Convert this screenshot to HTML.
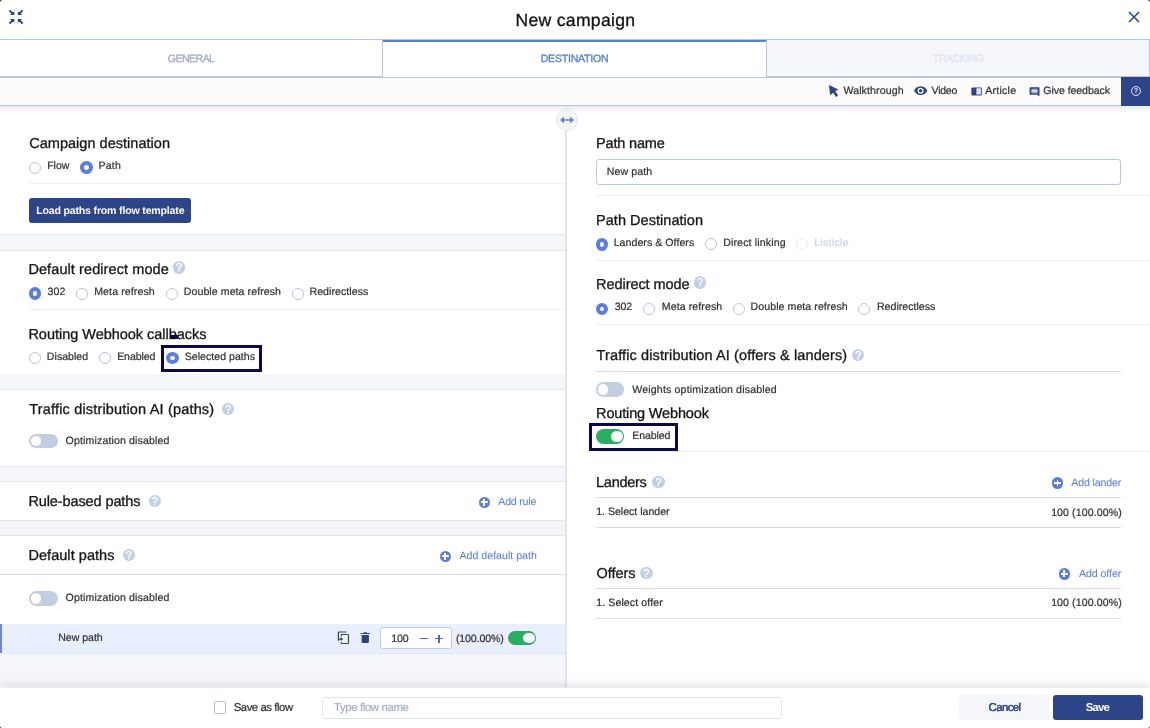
<!DOCTYPE html>
<html lang="en"><head><meta charset="utf-8"><title>New campaign</title>
<style>
html,body{margin:0;padding:0}
body{width:1150px;height:728px;overflow:hidden;background:#2a2a2a;font-family:"Liberation Sans", sans-serif;position:relative}
#m{position:absolute;left:0;top:0;width:1150px;height:728px;background:#fff;border-radius:3px;overflow:hidden;will-change:transform}
.t{position:absolute;white-space:pre;line-height:1;text-rendering:geometricPrecision;font-family:"Liberation Sans", sans-serif}
.a{position:absolute;box-sizing:border-box}

.r{position:absolute;box-sizing:border-box;width:12px;height:12px;border-radius:50%;border:1px solid #bac7e0;background:#fff}
.r.s{border:4.2px solid #5b7fd9;background:#fff}
.r.d{border-color:#e3e9f3}
.q{position:absolute;width:12.4px;height:12.4px;border-radius:50%;background:#c3cfe3;color:#fff;font:400 11px/13.9px "Liberation Sans",sans-serif;text-align:center;-webkit-text-stroke:0.3px #fff}
.p{position:absolute;width:11.6px;height:11.6px;border-radius:50%;background:#5b7fd9}
.p:before{content:"";position:absolute;left:2.4px;top:4.85px;width:6.8px;height:1.9px;background:#fff}
.p:after{content:"";position:absolute;left:4.85px;top:2.4px;width:1.9px;height:6.8px;background:#fff}
.g{position:absolute;width:29px;height:14px;border-radius:7px;background:#c3cfe1}
.g:after{content:"";position:absolute;left:1.7px;top:2px;width:10.5px;height:10.6px;border-radius:50%;background:#fff}
.g.on{background:#29ae61;width:28.2px}
.g.on:after{left:15.3px;top:2.1px;width:11.4px;height:10.4px}

</style></head><body><div id="m">
<div class="a" style="left:0px;top:39px;width:1150px;height:1px;background:#b7c5de;"></div>
<div class="a" style="left:0px;top:40px;width:382px;height:36px;background:#fff;"></div>
<div class="a" style="left:0px;top:76px;width:1150px;height:2px;background:#b7c5de;"></div>
<div class="a" style="left:382px;top:40px;width:1px;height:37px;background:#b7c5de;"></div>
<div class="a" style="left:383px;top:40px;width:383px;height:37px;background:#fff;"></div>
<div class="a" style="left:383px;top:40px;width:384px;height:2px;background:#5b7fd9;"></div>
<div class="a" style="left:766px;top:40px;width:1px;height:37px;background:#b7c5de;"></div>
<div class="a" style="left:767px;top:40px;width:383px;height:36px;background:#f5f7fa;"></div>
<div class="a" style="left:1149px;top:40px;width:1px;height:37px;background:#b7c5de;"></div>
<div class="a" style="left:383px;top:76px;width:383px;height:1px;background:#fff;"></div>
<div class="a" style="left:0px;top:78px;width:1150px;height:27px;background:#fbfbfc;"></div>
<div class="a" style="left:0px;top:105px;width:1150px;height:1px;background:#b7c5de;"></div>
<div class="a" style="left:1121px;top:77px;width:29px;height:29px;background:#2d4588;"></div>
<div class="a" style="left:0px;top:106px;width:565px;height:581px;background:#f5f6f9;"></div>
<div class="a" style="left:0px;top:106px;width:565px;height:128px;background:#fff;"></div>
<div class="a" style="left:0px;top:234px;width:565px;height:1px;background:#e0e5ef;"></div>
<div class="a" style="left:0px;top:250px;width:565px;height:1px;background:#e0e5ef;"></div>
<div class="a" style="left:0px;top:251px;width:565px;height:123px;background:#fff;"></div>
<div class="a" style="left:0px;top:389px;width:565px;height:1px;background:#e0e5ef;"></div>
<div class="a" style="left:0px;top:390px;width:565px;height:76px;background:#fff;"></div>
<div class="a" style="left:0px;top:466px;width:565px;height:1px;background:#e0e5ef;"></div>
<div class="a" style="left:0px;top:481px;width:565px;height:1px;background:#e0e5ef;"></div>
<div class="a" style="left:0px;top:482px;width:565px;height:38px;background:#fff;"></div>
<div class="a" style="left:0px;top:520px;width:565px;height:1px;background:#e0e5ef;"></div>
<div class="a" style="left:0px;top:535px;width:565px;height:1px;background:#e0e5ef;"></div>
<div class="a" style="left:0px;top:536px;width:565px;height:117px;background:#fff;"></div>
<div class="a" style="left:29px;top:183px;width:536px;height:1px;background:#ebeff6;"></div>
<div class="a" style="left:29px;top:309px;width:536px;height:1px;background:#ebeff6;"></div>
<div class="a" style="left:0px;top:574px;width:565px;height:1px;background:#d7dfee;"></div>
<div class="a" style="left:0px;top:624px;width:565px;height:29px;background:#e9effc;"></div>
<div class="a" style="left:0px;top:624px;width:2px;height:29px;background:#6a86da;"></div>
<div class="a" style="left:2px;top:652.5px;width:563px;height:1px;background:#dfe6f3;"></div>
<div class="a" style="left:0;top:106px;width:1150px;height:7px;background:linear-gradient(rgba(40,50,80,.09),rgba(40,50,80,0))"></div>
<div class="a" style="left:565px;top:106px;width:2px;height:581px;background:#dfe5f0;"></div>
<div class="a" style="left:556px;top:109px;width:22px;height:22px;border-radius:50%;background:#f4f6fa;border:1px solid #dfe5f0"></div>
<svg class="a" style="left:560px;top:115px" width="14" height="10" viewBox="0 0 14 10"><path d="M0.2 5 L3.9 1.5 V4.25 H10.1 V1.5 L13.8 5 L10.1 8.5 V5.75 H3.9 V8.5 Z" fill="#5b7fd9"/></svg>
<div class="a" style="left:29px;top:198px;width:162px;height:25px;background:#2d4488;border-radius:3px"></div>
<div class="r " style="left:29.0px;top:161.5px"></div>
<div class="r s" style="left:80.00px;top:161.00px;width:13px;height:12.8px"></div>
<div class="r s" style="left:28.95px;top:287.25px;width:12.3px;height:12.5px"></div>
<div class="r " style="left:76.0px;top:287.5px"></div>
<div class="r " style="left:165.5px;top:287.5px"></div>
<div class="r " style="left:292.0px;top:287.5px"></div>
<div class="r " style="left:29.0px;top:351.7px"></div>
<div class="r " style="left:99.3px;top:351.7px"></div>
<div class="r s" style="left:166.00px;top:351.90px;width:13px;height:12.2px"></div>
<div class="a" style="left:161px;top:344.5px;width:101px;height:27px;border:3px solid #0b0a47"></div>
<div class="a" style="left:171px;top:335.2px;width:7.3px;height:3.5px;background:#0b0a47;z-index:3"></div>
<div class="q" style="left:172.8px;top:261.3px">?</div>
<div class="q" style="left:222.1px;top:403.1px">?</div>
<div class="q" style="left:148.6px;top:495.0px">?</div>
<div class="q" style="left:122.6px;top:549.0px">?</div>
<div class="q" style="left:694.0px;top:276.2px">?</div>
<div class="q" style="left:852.1px;top:348.7px">?</div>
<div class="q" style="left:652.3px;top:476.1px">?</div>
<div class="q" style="left:640.2px;top:566.6px">?</div>
<div class="a" style="left:29px;top:434px;width:29px;height:14px;border-radius:7.0px;background:#c3cfe1"><div class="a" style="left:1.7px;top:1.9px;width:10.5px;height:10.5px;border-radius:50%;background:#fff"></div></div>
<div class="a" style="left:29px;top:590.9px;width:29px;height:15.1px;border-radius:7.55px;background:#c3cfe1"><div class="a" style="left:1.7px;top:1.9px;width:10.5px;height:11.6px;border-radius:50%;background:#fff"></div></div>
<div class="p" style="left:478.6px;top:496.6px"></div>
<div class="p" style="left:439.6px;top:550.6px"></div>
<div class="p" style="left:1051.7px;top:477.3px"></div>
<div class="p" style="left:1058.6px;top:568.1px"></div>
<div class="a" style="left:380px;top:627px;width:72px;height:21.5px;background:#fff;border:1px solid #c1cde3;border-radius:3px"></div>
<div class="a" style="left:420px;top:638.1px;width:8px;height:1.4px;background:#4f68b0;"></div>
<div class="a" style="left:435px;top:638.1px;width:8px;height:1.4px;background:#4f68b0;"></div>
<div class="a" style="left:438.3px;top:634.8px;width:1.4px;height:8px;background:#4f68b0;"></div>
<div class="a" style="left:507.9px;top:630.8px;width:28.2px;height:14.1px;border-radius:7.05px;background:#29ae61"><div class="a" style="left:15.2px;top:1.9px;width:11.6px;height:10.6px;border-radius:50%;background:#fff"></div></div>
<svg class="a" style="left:337px;top:631px" width="13" height="14" viewBox="0 0 13 14"><path d="M9.5 1 H2.2 Q1.4 1 1.4 1.8 V9.7" fill="none" stroke="#2c4287" stroke-width="1.2"/><rect x="4.3" y="3.5" width="7.2" height="9" fill="#f4f7fe"/><path d="M4.3 5.2 V4.3 Q4.3 3.5 5.1 3.5 H10.7 Q11.5 3.5 11.5 4.3 V11.7 Q11.5 12.5 10.7 12.5 H5.1 Q4.3 12.5 4.3 11.7 V11" fill="none" stroke="#2c4287" stroke-width="1.2"/><path d="M1.4 7.5 H3.7 V6 L6.2 8.1 L3.7 10.2 V8.7 H1.4 Z" fill="#2c4287"/></svg>
<svg class="a" style="left:360px;top:632px" width="11" height="12" viewBox="0 0 11 12"><path d="M0.8 1 H3.5 L4 0.3 H6.6 L7.1 1 H9.8 V2.1 H0.8 Z M1.7 2.9 H8.9 V10 Q8.9 10.9 8 10.9 H2.6 Q1.7 10.9 1.7 10 Z" fill="#2c4287"/></svg>
<div class="a" style="left:596px;top:159px;width:525px;height:25.5px;background:#fff;border:1px solid #b9c8e3;border-radius:3px"></div>
<div class="a" style="left:596px;top:195px;width:554px;height:1px;background:#ebeff6;"></div>
<div class="a" style="left:596px;top:260px;width:554px;height:1px;background:#ebeff6;"></div>
<div class="a" style="left:596px;top:324px;width:554px;height:1px;background:#ebeff6;"></div>
<div class="a" style="left:596px;top:371px;width:525px;height:1px;background:#d7dfee;"></div>
<div class="a" style="left:596px;top:451px;width:554px;height:1px;background:#ebeff6;"></div>
<div class="a" style="left:596px;top:497px;width:525px;height:1px;background:#d7dfee;"></div>
<div class="a" style="left:596px;top:527px;width:525px;height:1px;background:#d7dfee;"></div>
<div class="a" style="left:596px;top:588px;width:525px;height:1px;background:#d7dfee;"></div>
<div class="a" style="left:596px;top:618px;width:525px;height:1px;background:#d7dfee;"></div>
<div class="r s" style="left:595.90px;top:237.50px;width:12.2px;height:13px"></div>
<div class="r " style="left:705.0px;top:238.0px"></div>
<div class="r d" style="left:796.4px;top:238.0px"></div>
<div class="r s" style="left:595.90px;top:302.50px;width:12.2px;height:12.4px"></div>
<div class="r " style="left:643.3px;top:302.7px"></div>
<div class="r " style="left:732.7px;top:302.7px"></div>
<div class="r " style="left:858.4px;top:302.7px"></div>
<div class="a" style="left:596px;top:382.2px;width:28.2px;height:14.6px;border-radius:7.3px;background:#c3cfe1"><div class="a" style="left:1.7px;top:1.9px;width:10.5px;height:11.1px;border-radius:50%;background:#fff"></div></div>
<div class="a" style="left:589.2px;top:423.1px;width:89px;height:27.7px;border:3px solid #0b0a47;background:#fff"></div>
<div class="a" style="left:596px;top:428.8px;width:28.2px;height:15.1px;border-radius:7.55px;background:#29ae61"><div class="a" style="left:15.2px;top:1.9px;width:11.6px;height:11.6px;border-radius:50%;background:#fff"></div></div>
<div class="a" style="left:0;top:687.5px;width:1150px;height:41px;background:#fff;box-shadow:0 -2px 9px rgba(30,40,60,.15)"></div>
<div class="a" style="left:214px;top:701.3px;width:12.3px;height:12.3px;background:#fff;border:1px solid #b3c2df;border-radius:2px"></div>
<div class="a" style="left:322px;top:697px;width:460px;height:21.5px;background:#fff;border:1px solid #dfe5f0;border-radius:3px"></div>
<div class="a" style="left:959px;top:695px;width:89.5px;height:25px;background:#f4f6fa;border-radius:3px"></div>
<div class="a" style="left:1053.3px;top:695px;width:89.7px;height:25px;background:#2d4488;border-radius:3px"></div>
<svg class="a" style="left:8px;top:9px" width="16" height="16" viewBox="0 0 16 16"><g stroke="#2c4287" stroke-width="1.95" fill="none"><path d="M1.5 1.4 L4.8 4.7"/><path d="M14.6 1.4 L11.3 4.7"/><path d="M1.5 14.6 L4.8 11.3"/><path d="M14.6 14.6 L11.3 11.3"/></g><g fill="#2c4287"><path d="M6.3 2.2 V6.1 H2.0 Z"/><path d="M9.8 2.2 V6.1 H14.1 Z"/><path d="M6.3 13.8 V9.9 H2.0 Z"/><path d="M9.8 13.8 V9.9 H14.1 Z"/></g></svg>
<svg class="a" style="left:1128px;top:11px" width="12" height="12" viewBox="0 0 12 12"><path d="M1 1 L11 11 M11 1 L1 11" stroke="#2c4287" stroke-width="1.5" fill="none"/></svg>
<svg class="a" style="left:828px;top:84px" width="12" height="14" viewBox="0 0 12 14"><path d="M0.9 0.9 L10.3 5.5 L7.2 7.3 L10.2 11.6 L8.1 12.9 L5.1 8.7 L2.2 11.2 Z" fill="#2c4287"/></svg>
<svg class="a" style="left:914.3px;top:86.3px" width="13.4" height="9.4" viewBox="0 0 13.4 9.4"><path d="M6.7 0.3 C3.5 0.3 1.1 2.5 0.1 4.7 C1.1 6.9 3.5 9.1 6.7 9.1 C9.9 9.1 12.3 6.9 13.3 4.7 C12.3 2.5 9.9 0.3 6.7 0.3 Z" fill="#2c4287"/><circle cx="6.6" cy="4.7" r="3" fill="#fff"/><circle cx="6.6" cy="4.7" r="1.7" fill="#2c4287"/></svg>
<svg class="a" style="left:970.5px;top:86.5px" width="11" height="9" viewBox="0 0 11 9"><rect x="0.4" y="0.4" width="10.4" height="8" rx="0.8" fill="#2c4287"/><rect x="5.5" y="1.3" width="4.3" height="6.2" fill="#fff"/><path d="M6.3 2.5 H9 V3.2 H6.3 Z M6.3 4.1 H9 V4.8 H6.3 Z M6.3 5.7 H9 V6.4 H6.3 Z" fill="#a9b5d8"/></svg>
<svg class="a" style="left:1028.5px;top:86.5px" width="11" height="10" viewBox="0 0 11 10"><path d="M1.3 0.2 H9.8 Q10.5 0.2 10.5 0.9 V9.6 L8.2 7.7 H1.3 Q0.6 7.7 0.6 7 V0.9 Q0.6 0.2 1.3 0.2 Z" fill="#2c4287"/><rect x="2.4" y="1.7" width="6.2" height="4.7" fill="#9ba8cf"/><rect x="2.4" y="3.45" width="6.2" height="1.1" fill="#fff"/></svg>
<div class="a" style="left:1130.9px;top:85.8px;width:10.2px;height:10.2px;border-radius:50%;border:1.2px solid #e6e9f3;color:#e6e9f3;font:700 7.5px/8px 'Liberation Sans',sans-serif;text-align:center">?</div>
<span class="t" style="left:515.44px;top:12px;font-size:17.6px;letter-spacing:0.300px;color:#111;-webkit-text-stroke:0.3px;">New campaign</span>
<span class="t" style="left:167.86px;top:54px;font-size:10.6px;letter-spacing:-0.580px;color:#a3aeca;-webkit-text-stroke:0.2px;-webkit-text-stroke:0.35px;">GENERAL</span>
<span class="t" style="left:540.67px;top:54px;font-size:10.6px;letter-spacing:-0.239px;color:#5b7fd9;-webkit-text-stroke:0.2px;-webkit-text-stroke:0.35px;">DESTINATION</span>
<span class="t" style="left:932.82px;top:54px;font-size:10.6px;letter-spacing:-0.505px;color:#dfe5f0;-webkit-text-stroke:0.2px;-webkit-text-stroke:0.35px;">TRACKING</span>
<span class="t" style="left:843.48px;top:86px;font-size:10.6px;letter-spacing:0.101px;color:#303030;-webkit-text-stroke:0.2px;">Walkthrough</span>
<span class="t" style="left:931.54px;top:86px;font-size:10.6px;letter-spacing:-0.268px;color:#303030;-webkit-text-stroke:0.2px;">Video</span>
<span class="t" style="left:985.34px;top:86px;font-size:10.6px;letter-spacing:0.220px;color:#303030;-webkit-text-stroke:0.2px;">Article</span>
<span class="t" style="left:1043.36px;top:86px;font-size:10.6px;letter-spacing:-0.092px;color:#303030;-webkit-text-stroke:0.2px;">Give feedback</span>
<span class="t" style="left:29.24px;top:137px;font-size:14.5px;letter-spacing:0.024px;color:#151515;-webkit-text-stroke:0.3px;">Campaign destination</span>
<span class="t" style="left:47.18px;top:161px;font-size:10.6px;letter-spacing:-0.052px;color:#303030;-webkit-text-stroke:0.2px;">Flow</span>
<span class="t" style="left:98.57px;top:161px;font-size:10.6px;letter-spacing:0.176px;color:#303030;-webkit-text-stroke:0.2px;">Path</span>
<span class="t" style="left:36.18px;top:206px;font-size:10.6px;letter-spacing:-0.187px;color:#fff;font-weight:700;">Load paths from flow template</span>
<span class="t" style="left:28.42px;top:263px;font-size:14.5px;letter-spacing:0.086px;color:#151515;-webkit-text-stroke:0.3px;">Default redirect mode</span>
<span class="t" style="left:47.44px;top:287px;font-size:10.6px;letter-spacing:0.111px;color:#303030;-webkit-text-stroke:0.2px;">302</span>
<span class="t" style="left:94.18px;top:287px;font-size:10.6px;letter-spacing:0.101px;color:#303030;-webkit-text-stroke:0.2px;">Meta refresh</span>
<span class="t" style="left:183.77px;top:287px;font-size:10.6px;letter-spacing:0.067px;color:#303030;-webkit-text-stroke:0.2px;">Double meta refresh</span>
<span class="t" style="left:309.48px;top:287px;font-size:10.6px;letter-spacing:0.048px;color:#303030;-webkit-text-stroke:0.2px;">Redirectless</span>
<span class="t" style="left:28.42px;top:328px;font-size:14.5px;letter-spacing:-0.023px;color:#151515;-webkit-text-stroke:0.3px;">Routing Webhook callbacks</span>
<span class="t" style="left:46.87px;top:352px;font-size:10.6px;letter-spacing:0.009px;color:#303030;-webkit-text-stroke:0.2px;">Disabled</span>
<span class="t" style="left:117.18px;top:352px;font-size:10.6px;letter-spacing:-0.124px;color:#303030;-webkit-text-stroke:0.2px;">Enabled</span>
<span class="t" style="left:184.68px;top:352px;font-size:10.6px;letter-spacing:0.018px;color:#303030;-webkit-text-stroke:0.2px;">Selected paths</span>
<span class="t" style="left:29.29px;top:403px;font-size:14.5px;letter-spacing:0.171px;color:#151515;-webkit-text-stroke:0.3px;">Traffic distribution AI (paths)</span>
<span class="t" style="left:65.62px;top:436px;font-size:10.6px;letter-spacing:0.126px;color:#303030;-webkit-text-stroke:0.2px;">Optimization disabled</span>
<span class="t" style="left:28.42px;top:495px;font-size:14.5px;letter-spacing:-0.104px;color:#151515;-webkit-text-stroke:0.3px;">Rule-based paths</span>
<span class="t" style="left:498.34px;top:497px;font-size:10.6px;letter-spacing:-0.206px;color:#5b7fd9;-webkit-text-stroke:0.2px;-webkit-text-stroke:0.05px;">Add rule</span>
<span class="t" style="left:28.42px;top:549px;font-size:14.5px;letter-spacing:0.053px;color:#151515;-webkit-text-stroke:0.3px;">Default paths</span>
<span class="t" style="left:459.53px;top:551px;font-size:10.6px;letter-spacing:0.012px;color:#5b7fd9;-webkit-text-stroke:0.2px;-webkit-text-stroke:0.05px;">Add default path</span>
<span class="t" style="left:65.62px;top:593px;font-size:10.6px;letter-spacing:0.126px;color:#303030;-webkit-text-stroke:0.2px;">Optimization disabled</span>
<span class="t" style="left:58.19px;top:633px;font-size:10.6px;letter-spacing:-0.029px;color:#303030;-webkit-text-stroke:0.2px;">New path</span>
<span class="t" style="left:391.15px;top:634px;font-size:10.6px;letter-spacing:-0.122px;color:#303030;-webkit-text-stroke:0.2px;">100</span>
<span class="t" style="left:455.94px;top:634px;font-size:10.6px;letter-spacing:-0.134px;color:#303030;-webkit-text-stroke:0.2px;">(100.00%)</span>
<span class="t" style="left:596.07px;top:137px;font-size:14.5px;letter-spacing:-0.177px;color:#151515;-webkit-text-stroke:0.3px;">Path name</span>
<span class="t" style="left:606.79px;top:167px;font-size:10.6px;letter-spacing:0.071px;color:#303030;-webkit-text-stroke:0.2px;">New path</span>
<span class="t" style="left:596.07px;top:214px;font-size:14.5px;letter-spacing:0.036px;color:#151515;-webkit-text-stroke:0.3px;">Path Destination</span>
<span class="t" style="left:613.68px;top:238px;font-size:10.6px;letter-spacing:0.043px;color:#303030;-webkit-text-stroke:0.2px;">Landers &amp; Offers</span>
<span class="t" style="left:723.17px;top:238px;font-size:10.6px;letter-spacing:0.144px;color:#303030;-webkit-text-stroke:0.2px;">Direct linking</span>
<span class="t" style="left:814.18px;top:238px;font-size:10.6px;letter-spacing:0.288px;color:#c9d3e6;-webkit-text-stroke:0.2px;">Listicle</span>
<span class="t" style="left:596.07px;top:278px;font-size:14.5px;letter-spacing:-0.061px;color:#151515;-webkit-text-stroke:0.3px;">Redirect mode</span>
<span class="t" style="left:614.72px;top:302px;font-size:10.6px;letter-spacing:-0.075px;color:#303030;-webkit-text-stroke:0.2px;">302</span>
<span class="t" style="left:661.78px;top:302px;font-size:10.6px;letter-spacing:0.093px;color:#303030;-webkit-text-stroke:0.2px;">Meta refresh</span>
<span class="t" style="left:750.57px;top:302px;font-size:10.6px;letter-spacing:0.062px;color:#303030;-webkit-text-stroke:0.2px;">Double meta refresh</span>
<span class="t" style="left:876.98px;top:302px;font-size:10.6px;letter-spacing:0.004px;color:#303030;-webkit-text-stroke:0.2px;">Redirectless</span>
<span class="t" style="left:596.55px;top:349px;font-size:14.5px;letter-spacing:0.124px;color:#151515;-webkit-text-stroke:0.3px;">Traffic distribution AI (offers &amp; landers)</span>
<span class="t" style="left:632.29px;top:385px;font-size:10.6px;letter-spacing:0.159px;color:#303030;-webkit-text-stroke:0.2px;">Weights optimization disabled</span>
<span class="t" style="left:596.07px;top:407px;font-size:14.5px;letter-spacing:-0.153px;color:#151515;-webkit-text-stroke:0.3px;">Routing Webhook</span>
<span class="t" style="left:632.18px;top:431px;font-size:10.6px;letter-spacing:-0.089px;color:#303030;-webkit-text-stroke:0.2px;">Enabled</span>
<span class="t" style="left:596.07px;top:476px;font-size:14.5px;letter-spacing:-0.273px;color:#151515;-webkit-text-stroke:0.3px;">Landers</span>
<span class="t" style="left:1071.34px;top:478px;font-size:10.6px;letter-spacing:-0.140px;color:#5b7fd9;-webkit-text-stroke:0.2px;-webkit-text-stroke:0.05px;">Add lander</span>
<span class="t" style="left:596.15px;top:507px;font-size:10.6px;letter-spacing:-0.013px;color:#303030;-webkit-text-stroke:0.2px;">1. Select lander</span>
<span class="t" style="left:1051.15px;top:508px;font-size:10.6px;letter-spacing:0.086px;color:#303030;-webkit-text-stroke:0.2px;">100 (100.00%)</span>
<span class="t" style="left:596.47px;top:567px;font-size:14.5px;letter-spacing:-0.042px;color:#151515;-webkit-text-stroke:0.3px;">Offers</span>
<span class="t" style="left:1078.93px;top:569px;font-size:10.6px;letter-spacing:-0.059px;color:#5b7fd9;-webkit-text-stroke:0.2px;-webkit-text-stroke:0.05px;">Add offer</span>
<span class="t" style="left:596.15px;top:598px;font-size:10.6px;letter-spacing:0.102px;color:#303030;-webkit-text-stroke:0.2px;">1. Select offer</span>
<span class="t" style="left:1051.15px;top:598px;font-size:10.6px;letter-spacing:0.086px;color:#303030;-webkit-text-stroke:0.2px;">100 (100.00%)</span>
<span class="t" style="left:233.64px;top:703px;font-size:11.4px;letter-spacing:-0.463px;color:#303030;-webkit-text-stroke:0.2px;">Save as flow</span>
<span class="t" style="left:333.97px;top:703px;font-size:11.4px;letter-spacing:-0.374px;color:#a3aeca;-webkit-text-stroke:0.2px;">Type flow name</span>
<span class="t" style="left:988.49px;top:703px;font-size:11.4px;letter-spacing:-0.578px;color:#2c4287;-webkit-text-stroke:0.2px;text-shadow:0 0 0.3px #2c4287;">Cancel</span>
<span class="t" style="left:1085.81px;top:703px;font-size:11.4px;letter-spacing:-0.828px;color:#fff;font-weight:700;">Save</span>
</div></body></html>
